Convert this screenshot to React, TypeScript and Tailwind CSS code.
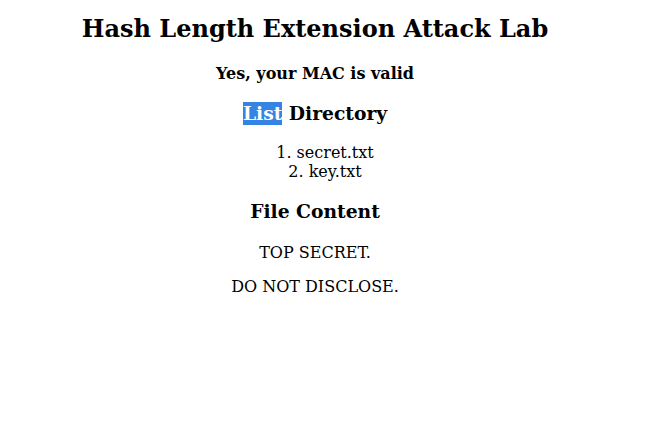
export default function App() {
  return (
    <div
      className="w-[630px] pt-[14px] text-center text-black bg-white leading-[normal]"
      style={{ fontFamily: '"DejaVu Serif", serif' }}
    >
      <h2 className="text-[24px] font-bold leading-[normal]">Hash Length Extension Attack Lab</h2>
      <h4 className="mt-[21px] text-[16px] font-bold leading-[normal]">Yes, your MAC is valid</h4>
      <h3 className="mt-[19px] text-[18.72px] font-bold leading-[normal]">
        <span className="bg-[#3584e4] text-white pb-[1px]">List</span> Directory
      </h3>
      <ol className="mt-[19px] pl-[20px] list-decimal list-inside text-[16px] leading-[normal]">
        <li>secret.txt</li>
        <li>key.txt</li>
      </ol>
      <h3 className="mt-[19px] text-[18.72px] font-bold leading-[normal]">File Content</h3>
      <p className="mt-[21px] text-[16px] leading-[normal]">TOP SECRET.</p>
      <p className="mt-[15px] text-[16px] leading-[normal]">DO NOT DISCLOSE.</p>
    </div>
  );
}
